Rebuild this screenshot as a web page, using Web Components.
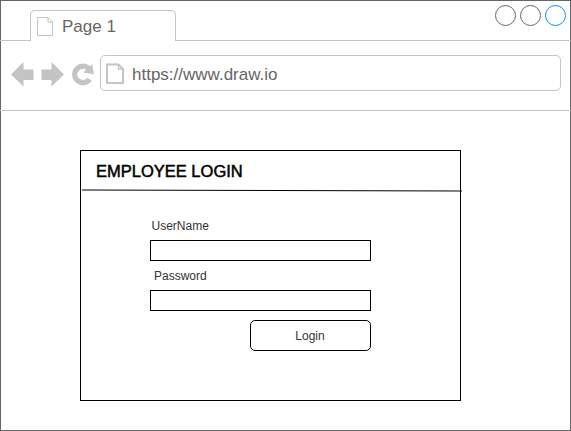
<!DOCTYPE html>
<html lang="en">
<head>
<meta charset="utf-8">
<title>Employee Login</title>
<style>
body{margin:0;background:#fff;font-family:"Liberation Sans",Arial,sans-serif}
</style>
</head>
<body>
<browser-window>
  <tab-strip slot="tabs">Page 1</tab-strip>
  <nav-bar slot="nav">https://www.draw.io</nav-bar>
  <login-card>
    <span slot="title">EMPLOYEE LOGIN</span>
    <form-field style="--indent:1.5px">UserName</form-field>
    <form-field style="--indent:4px">Password</form-field>
    <action-button>Login</action-button>
  </login-card>
</browser-window>
<script>
function define(name, markup) {
  const t = document.createElement('template');
  t.innerHTML = markup;
  customElements.define(name, class extends HTMLElement {
    constructor() {
      super();
      this.attachShadow({ mode: 'open' }).append(t.content.cloneNode(true));
    }
  });
}

define('browser-window', `<style>
:host{display:grid;grid-template-rows:40px 70px 1fr;box-sizing:border-box;width:571px;height:431px;border:1px solid #666;background:#fff}
main{padding:39px 0 0 79px}
</style><slot name="tabs"></slot><slot name="nav"></slot><main><slot></slot></main>`);

define('tab-strip', `<style>
:host{display:flex;color:#666;font-size:17px;line-height:20px}
.lead{width:30px;margin-left:-1px;border-bottom:1px solid #c4c4c4}
.tab{box-sizing:border-box;width:146px;margin-top:9px;border:1px solid #c4c4c4;border-bottom:0;border-radius:5px 5px 0 0;display:flex;padding:6px 0 0 6px;gap:9px}
.tab span{white-space:nowrap}
.rest{flex:1;margin-right:-1px;border-bottom:1px solid #c4c4c4;display:flex;justify-content:flex-end;gap:4px;padding:4px 5px 0 0}
.rest svg{flex:none}
</style>
<div class="lead"></div>
<div class="tab"><svg width="16" height="19" fill="none" stroke="#c4c4c4"><path d="M.5.5H11L15.500 5V18.500H.5ZM11 .5V5H15.500"/></svg><span><slot></slot></span></div>
<div class="rest">
<svg width="21" height="21"><circle cx="10.500" cy="10.500" r="10" fill="none" stroke="#666"/></svg>
<svg width="21" height="21"><circle cx="10.500" cy="10.500" r="10" fill="none" stroke="#666"/></svg>
<svg width="21" height="21"><circle cx="10.500" cy="10.500" r="10" fill="none" stroke="#008cff"/></svg>
</div>`);

define('nav-bar', `<style>
:host{display:flex;box-sizing:border-box;margin:0 -1px;border-bottom:1px solid #c4c4c4;color:#666;font-size:17px;line-height:20px;padding-top:14px}
.icons{flex:none;margin:0 6px 0 11px}
.url{box-sizing:border-box;width:461px;height:36px;border:1px solid #c4c4c4;border-radius:5px;display:flex;align-items:flex-start;gap:8px;padding:7px 0 0 5px}
.url span{margin-top:2px}
</style>
<svg class="icons" width="83" height="36" fill="#c4c4c4">
<path d="M0 19.500 12.500 7V14.500H22.500V25H12.500V31.500Z"/>
<path d="M53 19.500 40.500 7V14.500H30.500V25H40.500V31.500Z"/>
<path d="M78.500 14.200A8.300 8.300 0 1 0 78.700 24.200" fill="none" stroke="#c4c4c4" stroke-width="5.200"/>
<path d="M81.300 9 82.800 19.200 72.300 17.600Z"/>
</svg>
<div class="url"><svg width="18" height="22" fill="none" stroke="#c4c4c4" stroke-width="2"><path d="M1 1.500H12.500L17 6V20H1Z"/><path d="M12.500 1.500V6H17" stroke-width="1.300"/></svg><span><slot></slot></span></div>`);

define('login-card', `<style>
:host{display:block;box-sizing:border-box;width:381px;height:251px;border:1px solid #000}
header{height:38px;box-sizing:border-box;padding:10px 0 0 15px;font-size:16.500px;line-height:20px;color:#000;-webkit-text-stroke:.5px #000}
.rule{display:block;margin-left:1px;overflow:visible}
.form{display:flex;flex-direction:column;margin-left:69px;width:221px;padding-top:27px}
</style>
<header><slot name="title"></slot></header>
<svg class="rule" width="378" height="3"><path d="M0 1 380 2" stroke="#000"/></svg>
<div class="form"><slot></slot></div>`);

define('form-field', `<style>
:host{display:block;height:50px;font-size:12px;line-height:14px;color:#333}
label{display:block;height:21px;padding-left:var(--indent)}
input{display:block;box-sizing:border-box;width:221px;height:21px;border:1px solid #000;border-radius:0;background:#fff;padding:0 4px;margin:0;outline:0}
</style><label for="f"><slot></slot></label><input id="f">`);

define('action-button', `<style>
:host{display:block;align-self:flex-end;margin-top:1px}
button{display:block;box-sizing:border-box;width:121px;height:31px;border:1px solid #000;border-radius:5px;background:#fff;font:12px/14px "Liberation Sans",Arial,sans-serif;color:#333;padding:0 1px 0 0;margin:0}
</style><button><slot></slot></button>`);
</script>
</body>
</html>
